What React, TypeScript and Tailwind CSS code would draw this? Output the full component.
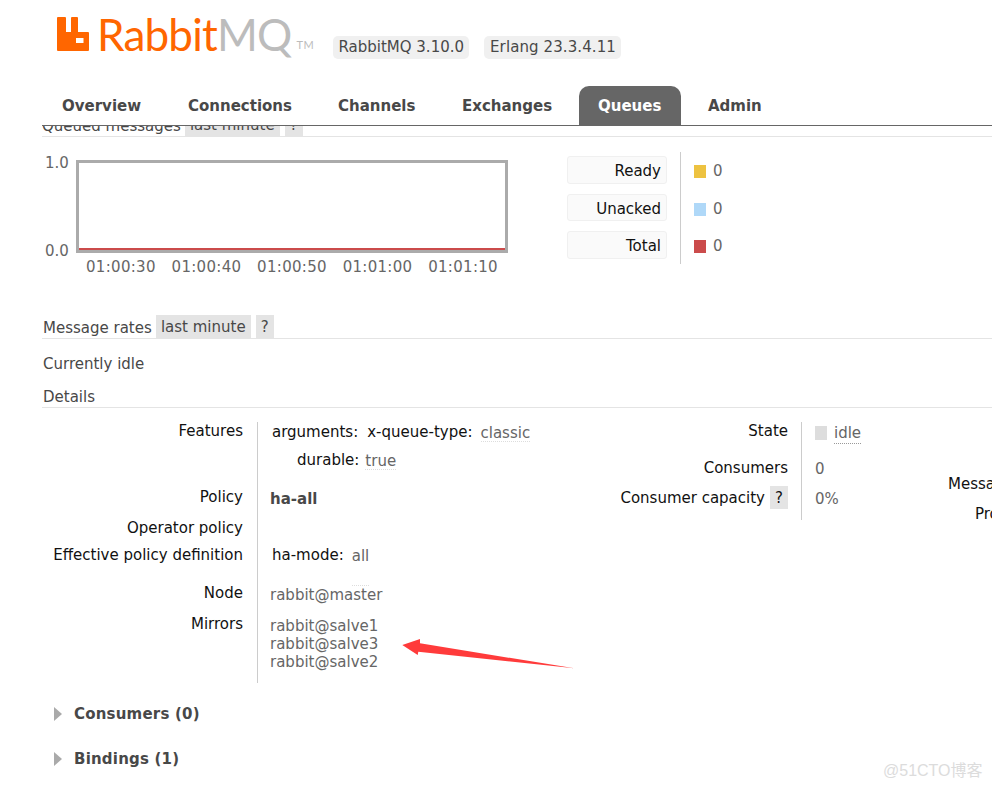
import React from "react";

const tabs = [
  { label: "Overview", w: "w-[126px]" },
  { label: "Connections", w: "w-[150px]" },
  { label: "Channels", w: "w-[124px]" },
  { label: "Exchanges", w: "w-[137px]" },
];

const chartTimes = ["01:00:30", "01:00:40", "01:00:50", "01:01:00", "01:01:10"];

const legend = [
  { label: "Ready", color: "bg-[#edc240]" },
  { label: "Unacked", color: "bg-[#afd8f8]" },
  { label: "Total", color: "bg-[#cb4b4b]" },
];

const Logo = () => (
  <div className="flex h-[50px] items-start">
    <svg width="32" height="34" viewBox="0 0 32 34" className="mt-[17px] shrink-0">
      <path
        fill="#ff6600"
        fillRule="evenodd"
        d="M1 0h7a1 1 0 0 1 1 1v14h5V1a1 1 0 0 1 1-1h5a1 1 0 0 1 1 1v14h10a1 1 0 0 1 1 1v17a1 1 0 0 1-1 1H1a1 1 0 0 1-1-1V1a1 1 0 0 1 1-1zM19 21v5h7.5v-5z"
      />
    </svg>
    <span className="ml-[8px] mt-[8px] font-['Lato'] text-[44px] leading-[52px] font-normal tracking-[-0.8px] text-[#ff6600]">
      Rabbit<span className="text-[#bcbcbc]">MQ</span>
    </span>
    <span className="ml-[5px] mt-[38px] font-['Lato'] text-[11px] leading-[14px] tracking-[0.5px] text-[#bcbcbc]">TM</span>
  </div>
);

const Header = () => (
  <header className="relative z-10 h-[126px] bg-white">
    <div className="flex pl-[57px]">
      <Logo />
      <div className="ml-auto mr-[371px] mt-[36px] flex gap-[15px] text-[15px] leading-[23px] text-[#484848]">
        <span className="rounded-[5px] bg-[#f0f0f0] px-[5px]">RabbitMQ 3.10.0</span>
        <span className="rounded-[5px] bg-[#f0f0f0] pl-[6px] pr-[5px] tracking-[0.1px]">Erlang 23.3.4.11</span>
      </div>
    </div>
    <nav className="ml-[42px] mt-[27px] flex h-[40px] border-b border-[#666] text-[15px] font-bold">
      {tabs.map((t) => (
        <a key={t.label} className={`${t.w} pl-[20px] pt-[9px] text-[#484848]`}>
          {t.label}
        </a>
      ))}
      <a className="h-[39px] w-[102px] rounded-t-[10px] bg-[#666] pl-[19px] pt-[9px] text-white">Queues</a>
      <a className="pl-[27px] pt-[9px] text-[#484848]">Admin</a>
    </nav>
  </header>
);

const SectionHead = ({ children, className }: { children: React.ReactNode; className?: string }) => (
  <div className={`flex h-[24px] items-center border-b border-[#e4e4e4] ${className ?? ""}`}>{children}</div>
);

const Pill = ({ children, className }: { children: React.ReactNode; className?: string }) => (
  <span className={`flex h-[23px] items-center justify-center bg-[#e4e4e4] pt-[2px] ${className ?? ""}`}>{children}</span>
);

const Chart = () => (
  <div className="flex h-[129px] w-[466px] text-[#666]">
    <div className="-mt-[6px] flex h-[106px] w-[34px] flex-col justify-between text-[15px] leading-[18px]">
      <span className="pl-[3px]">1.0</span>
      <span className="pl-[3px]">0.0</span>
    </div>
    <div>
      <div className="flex h-[93px] w-[432px] flex-col justify-end border-[3px] border-[#ababab] bg-white">
        <div className="h-[2px] bg-[#cb4b4b]" />
      </div>
      <div className="mt-[5px] flex w-[432px] justify-between pl-[10px] pr-[10px] text-[15px] leading-[18px] tracking-[0.3px]">
        {chartTimes.map((t) => (
          <span key={t}>{t}</span>
        ))}
      </div>
    </div>
  </div>
);

const Legend = () => (
  <div className="-mt-[8px] ml-[59px] flex h-[112px] items-stretch">
    <div className="flex w-[114px] flex-col gap-[10px] border-r border-[#ccc] pt-[4px]">
      {legend.map((l) => (
        <div
          key={l.label}
          className="h-[27.5px] w-[100px] rounded-[3px] border border-[#f0f0f0] bg-[#fafafa] pr-[5px] text-right text-[15px] leading-[28px] text-[#111]"
        >
          {l.label}
        </div>
      ))}
    </div>
    <div className="flex flex-col gap-[24.5px] pl-[13px] pt-[13px]">
      {legend.map((l) => (
        <div key={l.label} className="flex h-[13px] items-center gap-[7px] text-[15px] text-[#666]">
          <span className={`h-[13px] w-[12px] ${l.color}`} />
          <span className="leading-[15px]">0</span>
        </div>
      ))}
    </div>
  </div>
);

const Abbr = ({ children, className }: { children: React.ReactNode; className?: string }) => (
  <span className={`border-b border-dotted border-[#ddd] text-[#666] ${className ?? ""}`}>
    <span className="relative top-[1px]">{children}</span>
  </span>
);

const Details = () => (
  <div className="relative mt-[14px] flex text-[15px] leading-[18px]">
    <div className="w-[215px] shrink-0 text-right text-[#111]">
      <div className="h-[66px] pr-[14px]">Features</div>
      <div className="h-[31px] pr-[14px]">Policy</div>
      <div className="h-[27px] pr-[14px]">Operator policy</div>
      <div className="h-[38px] pr-[14px]">Effective policy definition</div>
      <div className="h-[31px] pr-[14px]">Node</div>
      <div className="pr-[14px]">Mirrors</div>
    </div>
    <div className="h-[261px] w-[345px] shrink-0 border-l border-[#ccc] text-[#111]">
      <div className="h-[68px] pl-[14px] pt-[1px]">
        <div className="flex">
          <span>arguments:</span>
          <span className="ml-[9px]">x-queue-type:</span>
          <Abbr className="ml-[8px]">classic</Abbr>
        </div>
        <div className="mt-[9px] flex pl-[25px]">
          <span>durable:</span>
          <Abbr className="ml-[6px]">true</Abbr>
        </div>
      </div>
      <div className="h-[56px] pl-[12px] font-bold text-[#484848]">ha-all</div>
      <div className="flex h-[40px] pl-[14px]">
        <span>ha-mode:</span>
        <Abbr className="ml-[8px]">all</Abbr>
      </div>
      <div className="h-[31px] pl-[12px] text-[#666]">rabbit@master</div>
      <div className="pl-[12px] text-[#666]">
        <div>rabbit@salve1</div>
        <div>rabbit@salve3</div>
        <div>rabbit@salve2</div>
      </div>
    </div>
    <div className="w-[199px] shrink-0 pr-[13px] text-right text-[#111]">
      <div className="h-[37px]">State</div>
      <div className="h-[27px]">Consumers</div>
      <div className="flex items-center justify-end gap-[5px]">
        <span>Consumer capacity</span>
        <span className="flex h-[23px] w-[18px] items-center justify-center bg-[#e4e4e4]">?</span>
      </div>
    </div>
    <div className="h-[98px] w-[147px] shrink-0 border-l border-[#ccc] pl-[13px] text-[#666]">
      <div className="flex h-[37px]">
        <span className="mt-[4px] h-[14px] w-[12px] bg-[#ddd]" />
        <span className="ml-[7px] mt-[2px] h-[20px] border-b border-dotted border-[#999]">idle</span>
      </div>
      <div className="h-[31px] pt-[1px]">0</div>
      <div>0%</div>
    </div>
    <div className="whitespace-nowrap pt-[53px] text-[#111]">
      <div>Messages</div>
      <div className="mt-[12px] pl-[27px]">Process memory</div>
    </div>
  </div>
);

const Toggle = ({ label }: { label: string }) => (
  <div className="flex h-[20px] items-center font-bold text-[#484848]">
    <span className="ml-[12px] h-0 w-0 border-y-[7px] border-l-[8px] border-y-transparent border-l-[#aaa]" />
    <span className="ml-[12px] text-[15px] tracking-[0.2px]">{label}</span>
  </div>
);

export default function App() {
  return (
    <div className="relative h-[790px] w-[992px] overflow-hidden bg-white font-['DejaVu_Sans',sans-serif]">
      <Header />
      {/* the scrolled page runs up under the fixed header */}
      <main className="-mt-[13px] whitespace-nowrap pl-[42px] text-[15px] text-[#484848]">
        <SectionHead>
          <span className="pr-[4px] pt-[3px]">Queued messages</span>
          <Pill className="w-[95px]">last minute</Pill>
          <Pill className="ml-[5px] w-[18px]">?</Pill>
        </SectionHead>
        <div className="mt-[23px] flex">
          <Chart />
          <Legend />
        </div>
        <SectionHead className="mt-[26px]">
          <span className="pl-[1px] pr-[4px] pt-[3px]">Message rates</span>
          <Pill className="w-[95px]">last minute</Pill>
          <Pill className="ml-[5px] w-[18px]">?</Pill>
        </SectionHead>
        <p className="mt-[16px] pl-[1px] leading-[18px]">Currently idle</p>
        <div className="mt-[14px] flex h-[21px] items-center border-b border-[#e4e4e4] pl-[1px] leading-[18px]">Details</div>
        <Details />
        <div className="mt-[21px] flex flex-col gap-[25px]">
          <Toggle label="Consumers (0)" />
          <Toggle label="Bindings (1)" />
        </div>
      </main>
      <svg className="absolute left-[400px] top-[636px]" width="180" height="36" viewBox="400 636 180 36">
        <path fill="#ff3b3b" d="M402.3 645 L420 639 L420 643.3 L574.3 668.3 L418.3 651.7 L417.7 655 Z" />
      </svg>
      <span className="absolute left-[883px] top-[762px] font-['Liberation_Sans','Noto_Sans_CJK_SC',sans-serif] text-[16px] leading-[18px] text-[#dcdcdc]">
        @51CTO博客
      </span>
    </div>
  );
}
